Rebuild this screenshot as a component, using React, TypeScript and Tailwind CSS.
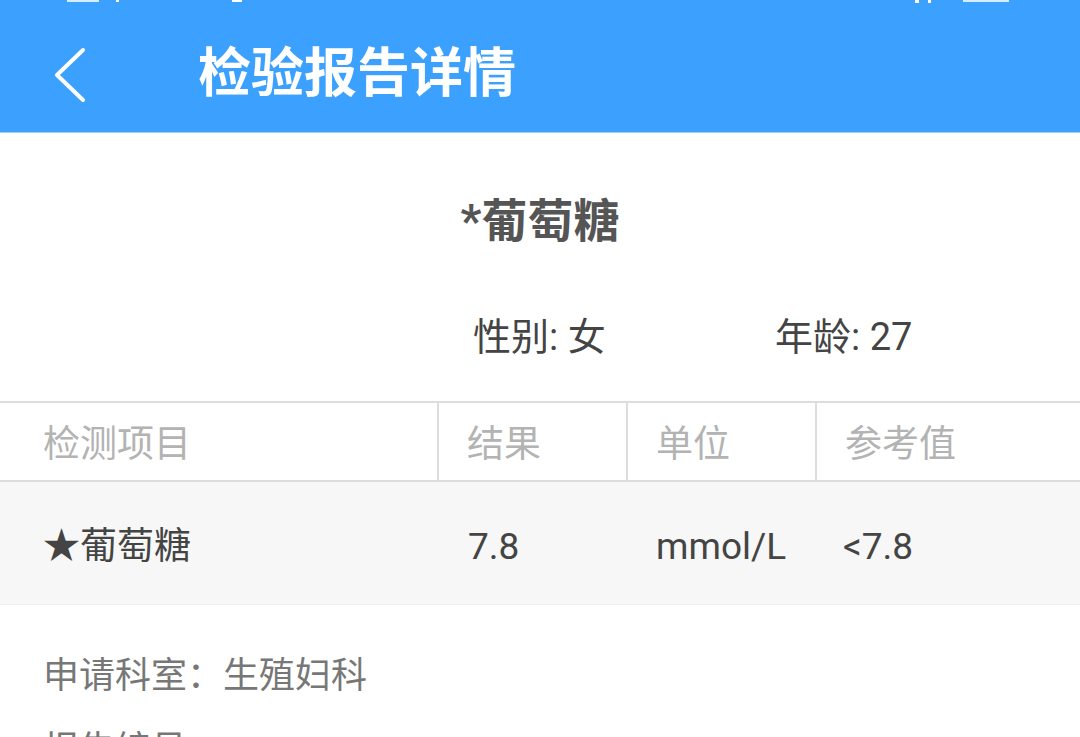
import React from "react";

const font = { fontFamily: "Roboto, 'Noto Sans CJK SC', 'Noto Sans', sans-serif" };

export default function App() {
  return (
    <div className="w-[1080px] h-[737px] overflow-hidden bg-white" style={font}>
      <div className="relative h-[133px] bg-[#3ca1fe] flex items-center border-b border-[#9fd0fb]">
        <svg className="absolute left-0 top-0" width="1080" height="4" viewBox="0 0 1080 4">
          <rect x="67" y="0" width="32" height="2" fill="#d6ecff" />
          <rect x="116" y="0" width="3" height="2" fill="#ffffff" />
          <rect x="232" y="0" width="10" height="2" fill="#ffffff" />
          <rect x="915" y="0" width="4" height="3" fill="#ffffff" />
          <rect x="928" y="0" width="3" height="3" fill="#ffffff" />
          <rect x="963" y="0" width="46" height="2" fill="#d6ecff" />
        </svg>
        <svg className="ml-[52px] mt-[18px]" width="36" height="56" viewBox="0 0 36 56">
          <path d="M31 3 L5 28 L31 53" fill="none" stroke="#ffffff" strokeWidth="4" strokeLinecap="round" strokeLinejoin="round" />
        </svg>
        <div className="ml-[110px] mt-[16px] text-white font-bold text-[53px] leading-[56px]">检验报告详情</div>
      </div>

      <div className="pt-[62px] text-center text-[#555555] font-bold text-[46px] leading-[52px]">*葡萄糖</div>

      <div className="mt-[68px] flex text-[#444444] text-[38px] leading-[44px] ml-[473px]">
        <div className="w-[302px]">性别: 女</div>
        <div>年龄: 27</div>
      </div>

      <div className="mt-[42px] border-t-2 border-[#dddddd]">
        <div className="flex h-[79px] border-b-2 border-[#dddddd] text-[#b3b3b3] text-[37px]">
          <div className="w-[439px] border-r-2 border-[#dddddd] pl-[43px] pt-[6px] flex items-center">检测项目</div>
          <div className="w-[189px] border-r-2 border-[#dddddd] pl-[28px] pt-[6px] flex items-center">结果</div>
          <div className="w-[189px] border-r-2 border-[#dddddd] pl-[28px] pt-[6px] flex items-center">单位</div>
          <div className="flex-1 pl-[28px] pt-[6px] flex items-center">参考值</div>
        </div>
        <div className="flex h-[123px] pt-[8px] bg-[#f7f7f7] border-b border-[#efefef] text-[#444444] text-[37px]">
          <div className="w-[439px] pl-[43px] flex items-center">★葡萄糖</div>
          <div className="w-[189px] pl-[29px] flex items-center">7.8</div>
          <div className="w-[189px] pl-[28px] flex items-center">mmol/L</div>
          <div className="flex-1 pl-[26px] flex items-center">&lt;7.8</div>
        </div>
      </div>

      <div className="pt-[46px] pl-[43px] text-[#777777] text-[36px] leading-[50px]">申请科室：生殖妇科</div>
      <div className="pt-[24px] pl-[43px] text-[#777777] text-[36px] leading-[50px]">报告编号：</div>
    </div>
  );
}
